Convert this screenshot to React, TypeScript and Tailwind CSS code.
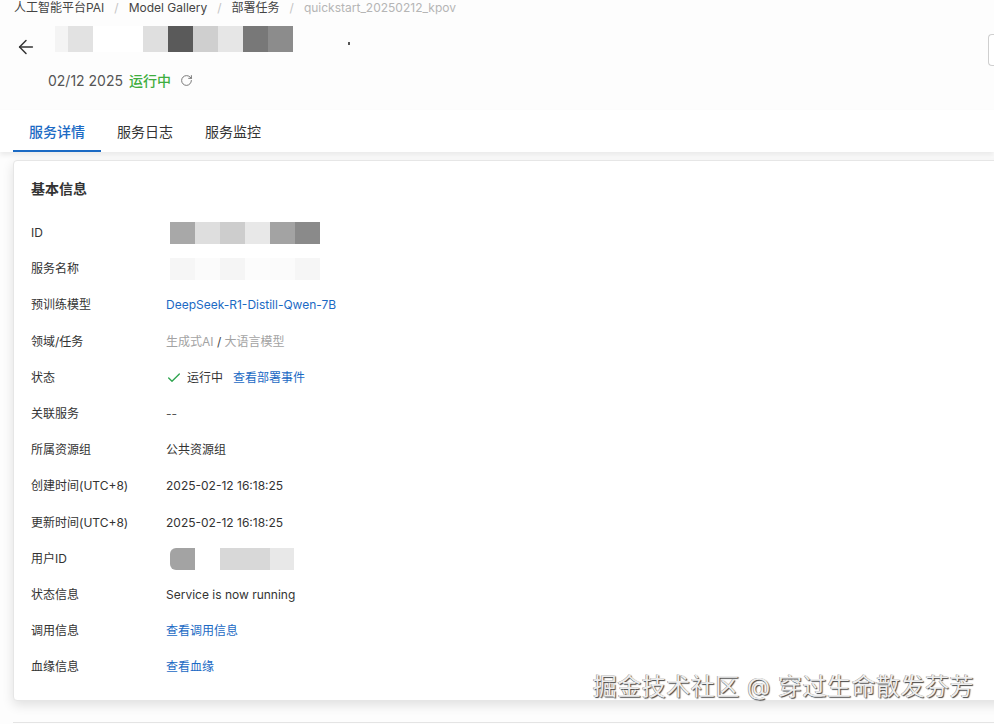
import { ArrowLeft, Check, RotateCw } from "lucide-react";

const font = {
  fontFamily: '"Inter", "Noto Sans CJK SC", sans-serif',
};

function Blocks({ colors, h = "h-[22px]" }: { colors: string[]; h?: string }) {
  return (
    <div className="flex">
      {colors.map((c, i) => (
        <div key={i} className={`${h} w-[25px]`} style={{ backgroundColor: c }} />
      ))}
    </div>
  );
}

const rows: { label: string; value: React.ReactNode }[] = [
  {
    label: "ID",
    value: (
      <div className="pl-1">
        <Blocks colors={["#a8a8a8", "#dedede", "#cdcdcd", "#e8e8e8", "#a3a3a3", "#8a8a8a"]} />
      </div>
    ),
  },
  {
    label: "服务名称",
    value: (
      <div className="pl-1">
        <Blocks colors={["#f6f6f6", "#fbfbfb", "#f5f5f5", "#fcfcfc", "#fbfbfb", "#f6f6f6"]} />
      </div>
    ),
  },
  {
    label: "预训练模型",
    value: <span className="text-[#1b6ac4]">DeepSeek-R1-Distill-Qwen-7B</span>,
  },
  {
    label: "领域/任务",
    value: (
      <span className="text-[#a3a3a3]">
        生成式AI <span className="text-[#444]">/</span> 大语言模型
      </span>
    ),
  },
  {
    label: "状态",
    value: (
      <span className="flex items-center">
        <Check className="h-4 w-4 text-[#2ea44f]" strokeWidth={2} />
        <span className="ml-[5px] text-[#333]">运行中</span>
        <span className="ml-[10px] text-[#1b6ac4]">查看部署事件</span>
      </span>
    ),
  },
  { label: "关联服务", value: <span className="text-[#555]">--</span> },
  { label: "所属资源组", value: <span>公共资源组</span> },
  { label: "创建时间(UTC+8)", value: <span>2025-02-12 16:18:25</span> },
  { label: "更新时间(UTC+8)", value: <span>2025-02-12 16:18:25</span> },
  {
    label: "用户ID",
    value: (
      <div className="flex pl-1">
        <div className="h-[22px] w-[25px] rounded-l-md bg-[#a3a3a3]" />
        <div className="h-[22px] w-[25px] bg-white" />
        <div className="h-[22px] w-[50px] bg-[#d8d8d8]" />
        <div className="h-[22px] w-[24px] bg-[#e8e8e8]" />
      </div>
    ),
  },
  { label: "状态信息", value: <span>Service is now running</span> },
  { label: "调用信息", value: <span className="text-[#1b6ac4]">查看调用信息</span> },
  { label: "血缘信息", value: <span className="text-[#1b6ac4]">查看血缘</span> },
];

export default function App() {
  return (
    <div className="relative h-[724px] w-[994px] overflow-hidden bg-[#fdfdfd] text-[#333]" style={font}>
      {/* breadcrumb */}
      <div className="flex h-4 items-center pl-[14px] text-[12px] text-[#444]">
        <span>人工智能平台PAI</span>
        <span className="px-[10px] text-[#c4c4c4]">/</span>
        <span>Model Gallery</span>
        <span className="px-[10px] text-[#c4c4c4]">/</span>
        <span>部署任务</span>
        <span className="px-[10px] text-[#c4c4c4]">/</span>
        <span className="text-[#b5b5b5]">quickstart_20250212_kpov</span>
      </div>

      {/* title row */}
      <div className="mt-[10px] flex h-[36px] items-start">
        <ArrowLeft className="ml-[15px] mt-[10px] h-[22px] w-[22px] text-[#333]" strokeWidth={1.6} />
        <div className="ml-[18px] flex">
          <div className="h-[26px] w-[13px] bg-[#f4f4f4]" />
          <div className="h-[26px] w-[25px] bg-[#e2e2e2]" />
          <div className="h-[26px] w-[50px] bg-white" />
          <Blocks h="h-[26px]" colors={["#dfdfdf", "#5a5a5a", "#cfcfcf", "#e6e6e6", "#787878", "#8c8c8c"]} />
        </div>
        <div className="ml-[55px] mt-[16px] h-[3px] w-[2px] bg-[#555]" />
        <div className="ml-auto mt-[8px] h-[32px] w-[6px] rounded-l-sm border border-r-0 border-[#cfcfcf] bg-white" />
      </div>

      {/* status line */}
      <div className="mt-[8px] flex h-[20px] items-center pl-[48px] text-[14px]">
        <span className="text-[#555]">02/12 2025</span>
        <span className="ml-[6px] font-medium text-[#3fae3f]">运行中</span>
        <RotateCw className="ml-[9px] h-[13px] w-[13px] text-[#666]" strokeWidth={1.6} />
      </div>

      {/* tabs */}
      <div className="relative mt-[20px] flex h-[42px] bg-white pl-[13px] text-[14px] shadow-[0_3px_5px_rgba(0,0,0,0.08)]">
        <div className="flex w-[88px] items-center justify-center border-b-2 border-[#1b6ac4] pt-[2px] font-medium text-[#1b6ac4]">
          服务详情
        </div>
        <div className="flex w-[88px] items-center justify-center text-[#333]">服务日志</div>
        <div className="flex w-[88px] items-center justify-center text-[#333]">服务监控</div>
      </div>

      {/* card */}
      <div className="ml-[13px] mt-[8px] w-[1000px] rounded-sm border border-[#e6e6e6] bg-white pb-[15px] pt-[17px] shadow-[0_4px_12px_rgba(0,0,0,0.12)]">
        <div className="pl-[17px] text-[14px] font-semibold leading-[22px] text-[#333]">基本信息</div>
        <div className="mt-[15px] flex flex-col text-[12px]">
          {rows.map((r) => (
            <div key={r.label} className="flex h-[36.2px] items-center">
              <div className="w-[152px] pl-[17px] text-[#333]">{r.label}</div>
              <div className="flex items-center text-[#333]">{r.value}</div>
            </div>
          ))}
        </div>
      </div>

      <div className="mt-[21px] ml-[13px] h-px w-[1000px] bg-[#e4e4e4]" />

      {/* watermark */}
      <div className="absolute bottom-[19px] right-[20px] text-[24px] tracking-[0.5px] text-[#ededed] [text-shadow:1px_1px_1px_#444,-0.5px_-0.5px_0_#888]">
        掘金技术社区 @ 穿过生命散发芬芳
      </div>
    </div>
  );
}
